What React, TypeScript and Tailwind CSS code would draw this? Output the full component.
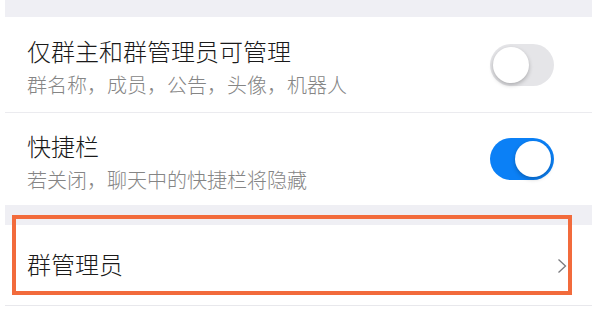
import React from 'react'

const font = { fontFamily: '"Noto Sans CJK SC", "Noto Sans", sans-serif' }

function Toggle({ on }: { on: boolean }) {
  return (
    <div
      className={
        on
          ? 'flex h-[42px] w-[64px] items-center justify-end rounded-full bg-[#0b80f6] px-[3px]'
          : 'flex h-[42px] w-[64px] items-center justify-start rounded-full bg-[#e5e5e8] px-[3px]'
      }
    >
      <div className="h-[36px] w-[36px] rounded-full bg-white shadow-[0_2px_4px_rgba(0,0,0,0.25)]" />
    </div>
  )
}

function SwitchRow({ title, sub, on, h }: { title: string; sub: string; on: boolean; h: string }) {
  return (
    <div className={`flex items-center justify-between bg-white pl-[22px] pr-[38px] ${h}`}>
      <div className="mt-[5px] flex flex-col">
        <div className="text-[24px] font-light leading-[30px] text-[#1a1a1a]">{title}</div>
        <div className="mt-[6px] text-[20px] font-light leading-[26px] text-[#858585]">{sub}</div>
      </div>
      <Toggle on={on} />
    </div>
  )
}

export default function App() {
  return (
    <div className="relative h-[313px] w-[600px] overflow-hidden bg-white" style={font}>
      <div className="ml-[5px] w-[587px]">
        <div className="h-[17px] bg-[#efeff4]" />
        <SwitchRow title="仅群主和群管理员可管理" sub="群名称，成员，公告，头像，机器人" on={false} h="h-[95px]" />
        <div className="h-px bg-[#ebebef]" />
        <SwitchRow title="快捷栏" sub="若关闭，聊天中的快捷栏将隐藏" on={true} h="h-[92px]" />
        <div className="h-[20px] bg-[#efeff4]" />
        <div className="flex h-[80px] items-center justify-between bg-white pl-[22px] pr-[25px]">
          <div className="mt-[-3px] text-[24px] font-light leading-[30px] text-[#1a1a1a]">群管理员</div>
          <svg width="10" height="16" viewBox="0 0 10 16" className="mt-[2px]">
            <path d="M1.5 1.5 L8.5 8 L1.5 14.5" fill="none" stroke="#7a7a7e" strokeWidth="1.3" />
          </svg>
        </div>
        <div className="h-px bg-[#e8e8ec]" />
      </div>
      <div className="absolute left-[12px] top-[215px] h-[80px] w-[560px] border-4 border-[#f26b3c]" />
    </div>
  )
}
